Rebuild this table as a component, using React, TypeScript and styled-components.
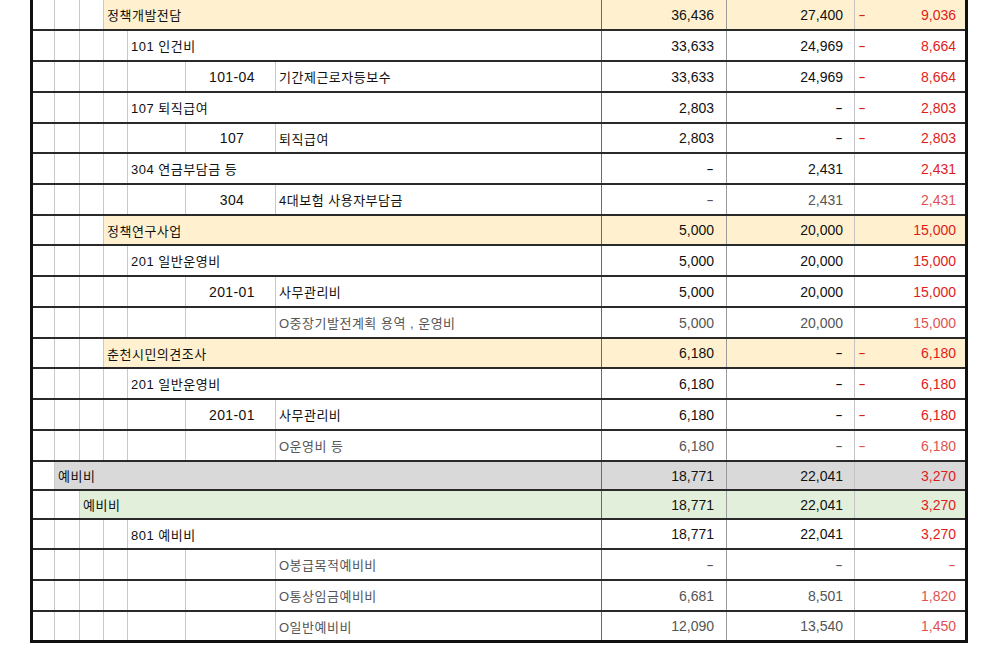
import React from "react";
import styled, { createGlobalStyle, css } from "styled-components";

const GlobalStyle = createGlobalStyle`
  html, body {
    margin: 0;
    padding: 0;
    background: #ffffff;
  }
  body {
    font-family: "Liberation Sans", "Noto Sans CJK KR", sans-serif;
    font-size: 13px;
    color: #111;
  }
`;

const COLS = "21px 25px 24px 24px 58px 90px 326px 125px 128px 111px";

const BG = {
  none: "transparent",
  beige: "#fff1cf",
  gray: "#d9d9d9",
  green: "#e2efda",
};

type Bg = keyof typeof BG;
type Tone = "main" | "detail";

const Sheet = styled.div`
  margin-left: 30px;
  width: 932px;
  border-left: 3px solid #111;
  border-right: 3px solid #111;
  border-bottom: 3px solid #111;
  background: #fff;
`;

const Row = styled.div<{ $h: number; $last?: boolean }>`
  display: grid;
  grid-template-columns: ${COLS};
  height: ${(p) => p.$h}px;
  box-sizing: border-box;
  border-bottom: ${(p) => (p.$last ? "none" : "2px solid #2a2a2a")};
`;

const Cell = styled.div<{ $bg?: Bg; $first?: boolean }>`
  display: flex;
  align-items: center;
  min-width: 0;
  box-sizing: border-box;
  border-left: ${(p) => (p.$first ? "none" : "1px solid #c9c9c9")};
  background: ${(p) => BG[p.$bg ?? "none"]};
  letter-spacing: 0.5px;
  white-space: nowrap;
`;

const Label = styled(Cell)<{ $from: number; $to: number; $gray?: boolean }>`
  grid-column: ${(p) => p.$from} / ${(p) => p.$to};
  padding-left: 3px;
  color: ${(p) => (p.$gray ? "#555" : "#111")};
`;

const Code = styled(Cell)`
  justify-content: center;
  padding-left: 3px;
  font-size: 14px;
  letter-spacing: 0.4px;
`;

const Num = styled(Cell)<{ $tone: Tone; $red?: boolean; $pr: number; $line: string }>`
  justify-content: space-between;
  padding-left: 4px;
  padding-right: ${(p) => p.$pr}px;
  border-left-color: ${(p) => p.$line};
  font-size: 14px;
  letter-spacing: 0;
  ${(p) =>
    p.$red
      ? css`
          color: ${p.$tone === "main" ? "#e01b1b" : "#e05252"};
        `
      : css`
          color: ${p.$tone === "main" ? "#111" : "#555"};
        `}
`;

const Dash = styled.span`
  font-size: 11px;
  font-weight: bold;
  padding-right: 1px;
`;

type Line = {
  level: number;
  code?: string;
  label: string;
  a: string;
  b: string;
  c: string;
  neg?: boolean;
  tone?: Tone;
  gray?: boolean;
  bg?: Bg;
  h: number;
};

const rows: Line[] = [
  { level: 3, label: "정책개발전담", a: "36,436", b: "27,400", c: "9,036", neg: true, bg: "beige", h: 31 },
  { level: 4, label: "101 인건비", a: "33,633", b: "24,969", c: "8,664", neg: true, h: 31 },
  { level: 5, code: "101-04", label: "기간제근로자등보수", a: "33,633", b: "24,969", c: "8,664", neg: true, h: 31 },
  { level: 4, label: "107 퇴직급여", a: "2,803", b: "-", c: "2,803", neg: true, h: 31 },
  { level: 5, code: "107", label: "퇴직급여", a: "2,803", b: "-", c: "2,803", neg: true, h: 30 },
  { level: 4, label: "304 연금부담금 등", a: "-", b: "2,431", c: "2,431", h: 31 },
  { level: 5, code: "304", label: "4대보험 사용자부담금", a: "-", b: "2,431", c: "2,431", tone: "detail", h: 31 },
  { level: 3, label: "정책연구사업", a: "5,000", b: "20,000", c: "15,000", bg: "beige", h: 30 },
  { level: 4, label: "201 일반운영비", a: "5,000", b: "20,000", c: "15,000", h: 31 },
  { level: 5, code: "201-01", label: "사무관리비", a: "5,000", b: "20,000", c: "15,000", h: 31 },
  { level: 6, label: "O중장기발전계획 용역 , 운영비", a: "5,000", b: "20,000", c: "15,000", tone: "detail", gray: true, h: 31 },
  { level: 3, label: "춘천시민의견조사", a: "6,180", b: "-", c: "6,180", neg: true, bg: "beige", h: 30 },
  { level: 4, label: "201 일반운영비", a: "6,180", b: "-", c: "6,180", neg: true, h: 31 },
  { level: 5, code: "201-01", label: "사무관리비", a: "6,180", b: "-", c: "6,180", neg: true, h: 31 },
  { level: 6, label: "O운영비 등", a: "6,180", b: "-", c: "6,180", neg: true, tone: "detail", gray: true, h: 31 },
  { level: 1, label: "예비비", a: "18,771", b: "22,041", c: "3,270", bg: "gray", h: 29 },
  { level: 2, label: "예비비", a: "18,771", b: "22,041", c: "3,270", bg: "green", h: 29 },
  { level: 4, label: "801 예비비", a: "18,771", b: "22,041", c: "3,270", h: 30 },
  { level: 6, label: "O봉급목적예비비", a: "-", b: "-", c: "-", tone: "detail", gray: true, h: 31 },
  { level: 6, label: "O통상임금예비비", a: "6,681", b: "8,501", c: "1,820", tone: "detail", gray: true, h: 31 },
  { level: 6, label: "O일반예비비", a: "12,090", b: "13,540", c: "1,450", tone: "detail", gray: true, h: 28 },
];

const Value = ({ v }: { v: string }) =>
  v === "-" ? <Dash>–</Dash> : <span>{v}</span>;

const BudgetRow = ({ r, last }: { r: Line; last: boolean }) => {
  const tone = r.tone ?? "main";
  const bg = r.bg ?? "none";
  const start = Math.min(r.level, 6);
  const indents = Array.from({ length: r.level === 5 ? 5 : start }, (_, i) => i);

  return (
    <Row $h={r.h} $last={last}>
      {indents.map((i) => (
        <Cell key={i} $first={i === 0} />
      ))}
      {r.level === 5 && <Code>{r.code}</Code>}
      <Label
        $from={(r.level === 5 ? 6 : start) + 1}
        $to={8}
        $bg={bg}
        $gray={r.gray}
        $first={start === 0}
      >
        {r.label}
      </Label>
      <Num $tone={tone} $bg={bg} $pr={12} $line="#6a6a6a">
        <span />
        <Value v={r.a} />
      </Num>
      <Num $tone={tone} $bg={bg} $pr={11} $line="#9a9a9a">
        <span />
        <Value v={r.b} />
      </Num>
      <Num $tone={tone} $bg={bg} $red $pr={9} $line="#c4c4c4">
        {r.neg ? <Dash>–</Dash> : <span />}
        <Value v={r.c} />
      </Num>
    </Row>
  );
};

export default function App() {
  return (
    <>
      <GlobalStyle />
      <Sheet>
        {rows.map((r, i) => (
          <BudgetRow key={i} r={r} last={i === rows.length - 1} />
        ))}
      </Sheet>
    </>
  );
}
